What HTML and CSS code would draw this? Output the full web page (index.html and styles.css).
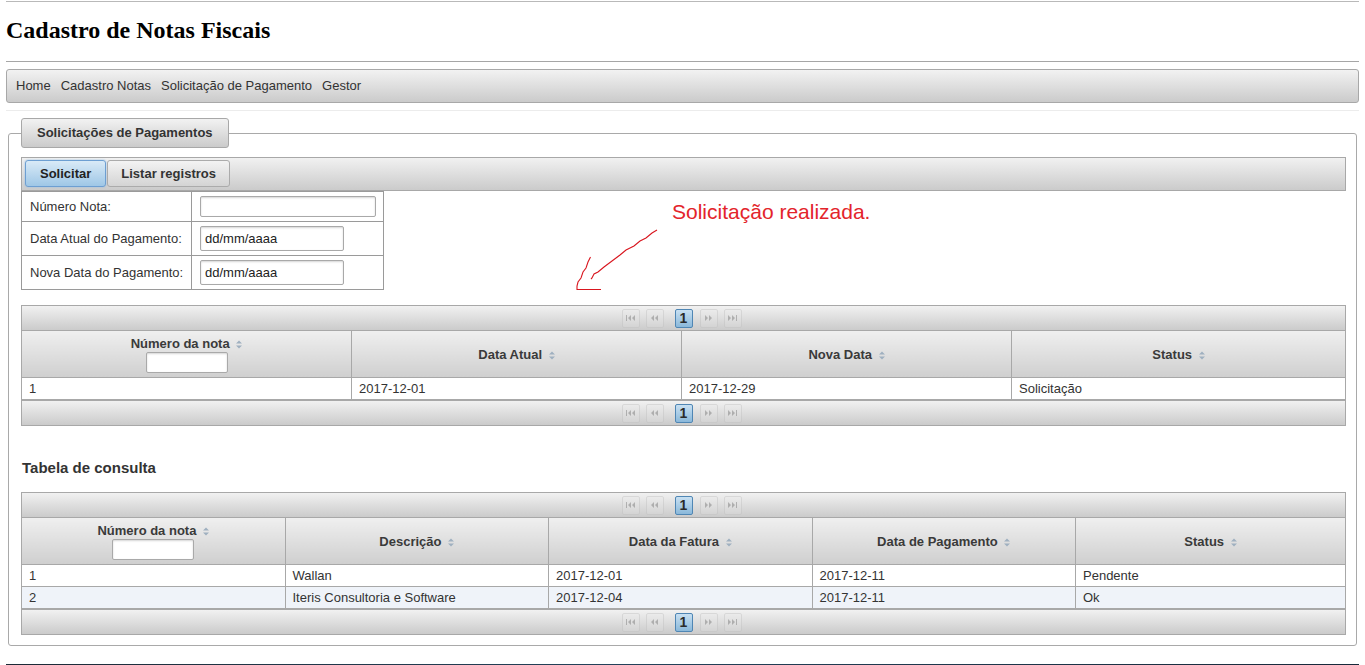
FILE: index.html
```html
<!DOCTYPE html>
<html lang="pt-BR">
<head>
<meta charset="utf-8">
<title>Cadastro de Notas Fiscais</title>
<link rel="stylesheet" href="styles.css">
</head>
<body>
<h1 class="title">Cadastro de Notas Fiscais</h1>
<hr class="rule">
<nav class="menubar">
  <a class="menu-item">Home</a>
  <a class="menu-item">Cadastro Notas</a>
  <a class="menu-item">Solicitação de Pagamento</a>
  <a class="menu-item">Gestor</a>
</nav>
<div class="sep"></div>

<fieldset class="panel">
  <legend class="panel-legend">Solicitações de Pagamentos</legend>

  <div class="toolbar">
    <button class="tab tab-active">Solicitar</button>
    <button class="tab">Listar registros</button>
  </div>

  <div class="form-row">
    <table class="form">
      <tr>
        <td class="lbl">Número Nota:</td>
        <td class="fld"><input class="inp inp-wide" type="text"></td>
      </tr>
      <tr>
        <td class="lbl">Data Atual do Pagamento:</td>
        <td class="fld"><input class="inp inp-date" type="text" value="dd/mm/aaaa"></td>
      </tr>
      <tr>
        <td class="lbl">Nova Data do Pagamento:</td>
        <td class="fld"><input class="inp inp-date" type="text" value="dd/mm/aaaa"></td>
      </tr>
    </table>
    <div class="msg">
      <svg class="arrow" width="96" height="90" viewBox="0 0 96 90">
        <path d="M81 30 L76 33 L70 38 L64 41 L58 46 L50 50 L44 55 L36 61 L28 67 L22 72 L18 74 L16 78 L15 79" fill="none" stroke="#d9161f" stroke-width="1.1"/>
        <path d="M14.5 57 L12 62 L10 68 L7 72 L5 78 L2 82 L1 86 L1 89.5 L25 89.5" fill="none" stroke="#d9161f" stroke-width="1.1"/>
      </svg>
      <span class="msg-text">Solicitação realizada.</span>
    </div>
  </div>

  <div class="dt">
    <div class="pager">
      <span class="pg pg-off"><svg width="9" height="6" viewBox="0 0 9 6"><rect x="0" y="0" width="1" height="6" fill="#777"/><path d="M5 0 L2 3 L5 6Z M9 0 L6 3 L9 6Z" fill="#777"/></svg></span>
      <span class="pg pg-off"><svg width="9" height="6" viewBox="0 0 9 6"><path d="M4 0 L1 3 L4 6Z M8 0 L5 3 L8 6Z" fill="#777"/></svg></span>
      <span class="pages"><span class="pg pg-on">1</span></span>
      <span class="pg pg-off"><svg width="9" height="6" viewBox="0 0 9 6"><path d="M1 0 L4 3 L1 6Z M5 0 L8 3 L5 6Z" fill="#777"/></svg></span>
      <span class="pg pg-off"><svg width="9" height="6" viewBox="0 0 9 6"><path d="M0 0 L3 3 L0 6Z M4 0 L7 3 L4 6Z" fill="#777"/><rect x="8" y="0" width="1" height="6" fill="#777"/></svg></span>
    </div>
    <table class="grid">
      <colgroup><col class="c4"><col class="c4"><col class="c4"><col></colgroup>
      <thead>
        <tr>
          <th class="th-top">Número da nota <svg class="sort" width="6" height="9" viewBox="0 0 6 9"><path d="M0 3.5 L3 0.5 L6 3.5Z M0 5.5 L3 8.5 L6 5.5Z" fill="#9fb0c0"/></svg><input class="filter" type="text"></th>
          <th>Data Atual <svg class="sort" width="6" height="9" viewBox="0 0 6 9"><path d="M0 3.5 L3 0.5 L6 3.5Z M0 5.5 L3 8.5 L6 5.5Z" fill="#9fb0c0"/></svg></th>
          <th>Nova Data <svg class="sort" width="6" height="9" viewBox="0 0 6 9"><path d="M0 3.5 L3 0.5 L6 3.5Z M0 5.5 L3 8.5 L6 5.5Z" fill="#9fb0c0"/></svg></th>
          <th>Status <svg class="sort" width="6" height="9" viewBox="0 0 6 9"><path d="M0 3.5 L3 0.5 L6 3.5Z M0 5.5 L3 8.5 L6 5.5Z" fill="#9fb0c0"/></svg></th>
        </tr>
      </thead>
      <tbody>
        <tr><td>1</td><td>2017-12-01</td><td>2017-12-29</td><td>Solicitação</td></tr>
      </tbody>
    </table>
    <div class="pager">
      <span class="pg pg-off"><svg width="9" height="6" viewBox="0 0 9 6"><rect x="0" y="0" width="1" height="6" fill="#777"/><path d="M5 0 L2 3 L5 6Z M9 0 L6 3 L9 6Z" fill="#777"/></svg></span>
      <span class="pg pg-off"><svg width="9" height="6" viewBox="0 0 9 6"><path d="M4 0 L1 3 L4 6Z M8 0 L5 3 L8 6Z" fill="#777"/></svg></span>
      <span class="pages"><span class="pg pg-on">1</span></span>
      <span class="pg pg-off"><svg width="9" height="6" viewBox="0 0 9 6"><path d="M1 0 L4 3 L1 6Z M5 0 L8 3 L5 6Z" fill="#777"/></svg></span>
      <span class="pg pg-off"><svg width="9" height="6" viewBox="0 0 9 6"><path d="M0 0 L3 3 L0 6Z M4 0 L7 3 L4 6Z" fill="#777"/><rect x="8" y="0" width="1" height="6" fill="#777"/></svg></span>
    </div>
  </div>

  <h3 class="section-title">Tabela de consulta</h3>

  <div class="dt">
    <div class="pager">
      <span class="pg pg-off"><svg width="9" height="6" viewBox="0 0 9 6"><rect x="0" y="0" width="1" height="6" fill="#777"/><path d="M5 0 L2 3 L5 6Z M9 0 L6 3 L9 6Z" fill="#777"/></svg></span>
      <span class="pg pg-off"><svg width="9" height="6" viewBox="0 0 9 6"><path d="M4 0 L1 3 L4 6Z M8 0 L5 3 L8 6Z" fill="#777"/></svg></span>
      <span class="pages"><span class="pg pg-on">1</span></span>
      <span class="pg pg-off"><svg width="9" height="6" viewBox="0 0 9 6"><path d="M1 0 L4 3 L1 6Z M5 0 L8 3 L5 6Z" fill="#777"/></svg></span>
      <span class="pg pg-off"><svg width="9" height="6" viewBox="0 0 9 6"><path d="M0 0 L3 3 L0 6Z M4 0 L7 3 L4 6Z" fill="#777"/><rect x="8" y="0" width="1" height="6" fill="#777"/></svg></span>
    </div>
    <table class="grid">
      <colgroup><col class="c5"><col class="c5"><col class="c5"><col class="c5"><col></colgroup>
      <thead>
        <tr>
          <th class="th-top">Número da nota <svg class="sort" width="6" height="9" viewBox="0 0 6 9"><path d="M0 3.5 L3 0.5 L6 3.5Z M0 5.5 L3 8.5 L6 5.5Z" fill="#9fb0c0"/></svg><input class="filter" type="text"></th>
          <th>Descrição <svg class="sort" width="6" height="9" viewBox="0 0 6 9"><path d="M0 3.5 L3 0.5 L6 3.5Z M0 5.5 L3 8.5 L6 5.5Z" fill="#9fb0c0"/></svg></th>
          <th>Data da Fatura <svg class="sort" width="6" height="9" viewBox="0 0 6 9"><path d="M0 3.5 L3 0.5 L6 3.5Z M0 5.5 L3 8.5 L6 5.5Z" fill="#9fb0c0"/></svg></th>
          <th>Data de Pagamento <svg class="sort" width="6" height="9" viewBox="0 0 6 9"><path d="M0 3.5 L3 0.5 L6 3.5Z M0 5.5 L3 8.5 L6 5.5Z" fill="#9fb0c0"/></svg></th>
          <th>Status <svg class="sort" width="6" height="9" viewBox="0 0 6 9"><path d="M0 3.5 L3 0.5 L6 3.5Z M0 5.5 L3 8.5 L6 5.5Z" fill="#9fb0c0"/></svg></th>
        </tr>
      </thead>
      <tbody>
        <tr><td>1</td><td>Wallan</td><td>2017-12-01</td><td>2017-12-11</td><td>Pendente</td></tr>
        <tr class="alt"><td>2</td><td>Iteris Consultoria e Software</td><td>2017-12-04</td><td>2017-12-11</td><td>Ok</td></tr>
      </tbody>
    </table>
    <div class="pager">
      <span class="pg pg-off"><svg width="9" height="6" viewBox="0 0 9 6"><rect x="0" y="0" width="1" height="6" fill="#777"/><path d="M5 0 L2 3 L5 6Z M9 0 L6 3 L9 6Z" fill="#777"/></svg></span>
      <span class="pg pg-off"><svg width="9" height="6" viewBox="0 0 9 6"><path d="M4 0 L1 3 L4 6Z M8 0 L5 3 L8 6Z" fill="#777"/></svg></span>
      <span class="pages"><span class="pg pg-on">1</span></span>
      <span class="pg pg-off"><svg width="9" height="6" viewBox="0 0 9 6"><path d="M1 0 L4 3 L1 6Z M5 0 L8 3 L5 6Z" fill="#777"/></svg></span>
      <span class="pg pg-off"><svg width="9" height="6" viewBox="0 0 9 6"><path d="M0 0 L3 3 L0 6Z M4 0 L7 3 L4 6Z" fill="#777"/><rect x="8" y="0" width="1" height="6" fill="#777"/></svg></span>
    </div>
  </div>
</fieldset>
<div class="taskbar"></div>
</body>
</html>
```
FILE: styles.css
```css
html {
  background: #fff;
}

body {
  margin: 1px 6px 0;
  border-top: 1px solid #b9b9b9;
  font-family: "Liberation Sans", Arial, sans-serif;
  font-size: 13px;
  color: #333;
}

.title {
  font-family: "Liberation Serif", "Times New Roman", serif;
  font-size: 24px;
  font-weight: bold;
  line-height: 27px;
  margin: 15px 0 0;
  color: #000;
}

.rule {
  border: 0;
  border-top: 1px solid #a6a6a6;
  height: 0;
  margin: 17px 0 0;
}

.menubar {
  margin-top: 7px;
  height: 30px;
  border: 1px solid #a8a8a8;
  border-radius: 3px;
  background: linear-gradient(to bottom, #f2f2f2, #cbcbcb);
  display: flex;
  align-items: center;
  gap: 10px;
  padding: 0 9px 2px;
}

.menu-item {
  color: #333;
  line-height: 15px;
  text-decoration: none;
}

.sep {
  margin-top: 7px;
  border-top: 1px solid #ececec;
}

.panel {
  margin: 7px 2px 0;
  border: 1px solid #a9a9a9;
  border-radius: 3px;
  padding: 9px 10px 10px 12px;
  min-width: 0;
}

.panel-legend {
  padding: 0 15px;
  height: 28px;
  line-height: 28px;
  border: 1px solid #a8a8a8;
  border-radius: 3px;
  background: linear-gradient(to bottom, #f2f2f2, #cbcbcb);
  font-weight: bold;
  color: #333;
}

.toolbar {
  display: flex;
  gap: 1px;
  padding: 2px 3px 3px;
  border: 1px solid #a8a8a8;
  background: linear-gradient(to bottom, #f1f1f1, #cbcbcb);
}

.tab {
  height: 27px;
  padding: 0 13px;
  border: 1px solid #ababab;
  border-radius: 3px;
  background: linear-gradient(to bottom, #f3f3f3, #d4d4d4);
  font-family: "Liberation Sans", Arial, sans-serif;
  font-size: 13px;
  font-weight: bold;
  color: #333;
}

.tab-active {
  padding: 0 14px;
  border-color: #6d9fd2;
  background: linear-gradient(to bottom, #d9eaf7, #9fc7e6);
  box-shadow: 0 0 2px #8db9e2;
  color: #222;
}

.form-row {
  display: flex;
  align-items: flex-start;
}

.form {
  border-collapse: collapse;
  border: 1px solid #9a9a9a;
  width: 363px;
}

.form td {
  border: 1px solid #9a9a9a;
  padding: 4px 7px 4px 8px;
  line-height: 15px;
}

.form .lbl {
  width: 155px;
  color: #333;
}

.inp {
  box-sizing: border-box;
  display: block;
  border: 1px solid #a9a9a9;
  border-radius: 2px;
  box-shadow: inset 0 1px 2px #d6d6d6;
  font-family: "Liberation Sans", Arial, sans-serif;
  font-size: 13px;
  color: #222;
  padding: 0 4px;
  margin: 0;
  background: #fff;
}

.inp-wide {
  width: 176px;
  height: 21px;
}

.inp-date {
  width: 144px;
  height: 25px;
}

.msg {
  display: flex;
  margin: 9px 0 0 192px;
}

.arrow {
  display: block;
  flex: none;
}

.msg-text {
  font-size: 21px;
  line-height: 24px;
  color: #e3242b;
}

.dt {
  margin-top: 15px;
}

.pager {
  height: 24px;
  border: 1px solid #a8a8a8;
  background: linear-gradient(to bottom, #f1f1f1, #cbcbcb);
  display: flex;
  justify-content: center;
  align-items: center;
  gap: 6px;
  padding-right: 4px;
}

.pg {
  box-sizing: border-box;
  width: 18px;
  height: 19px;
  border: 1px solid #c2c2c2;
  border-radius: 2px;
  display: flex;
  align-items: center;
  justify-content: center;
}

.pg-off {
  background: linear-gradient(to bottom, #ececec, #dadada);
  opacity: 0.45;
}

.pages {
  display: flex;
  margin: 0 1px 0 5px;
}

.pg-on {
  border-color: #4f86b4;
  background: linear-gradient(to bottom, #c8e0f2, #8ab8da);
  font-weight: bold;
  font-size: 14px;
  color: #2b2b2b;
}

.grid {
  width: 100%;
  table-layout: fixed;
  border-collapse: collapse;
  border: 1px solid #a8a8a8;
  border-top: 0;
}

.c4 {
  width: 330px;
}

.c5 {
  width: 263.5px;
}

.grid th {
  border: 1px solid #a8a8a8;
  border-top: 0;
  background: linear-gradient(to bottom, #efefef, #cfcfcf);
  font-weight: bold;
  color: #3a3a3a;
  height: 38px;
  padding: 5px 6px 3px;
  line-height: 16px;
  vertical-align: middle;
  text-align: center;
}

.grid th.th-top {
  vertical-align: top;
}

.sort {
  margin-left: 3px;
  vertical-align: -1px;
}

.filter {
  box-sizing: border-box;
  display: block;
  margin: 0 auto;
  width: 82px;
  height: 21px;
  border: 1px solid #a9a9a9;
  border-radius: 2px;
  box-shadow: inset 0 1px 2px #d6d6d6;
  background: #fff;
  padding: 0;
}

.grid td {
  border: 1px solid #a8a8a8;
  padding: 3px 7px;
  line-height: 15px;
  color: #333;
  background: #fff;
  white-space: nowrap;
  overflow: hidden;
}

.grid tr.alt td {
  background: #eff3f9;
}

.section-title {
  font-size: 15px;
  line-height: 18px;
  font-weight: bold;
  color: #333;
  margin: 33px 0 14px 1px;
}

.taskbar {
  margin: 18px -6px 0;
  height: 2px;
  background: linear-gradient(to right, #1c2a36, #23425a 45%, #17293a);
}
```
